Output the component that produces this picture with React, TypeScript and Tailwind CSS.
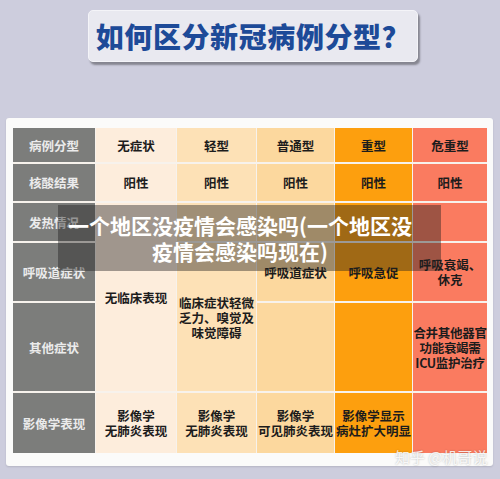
import React from "react";

const gray = "bg-[#7c7d7b] text-[#ebebeb]";
const c2 = "bg-[#fdeddc]";
const c3 = "bg-[#fde1b6]";
const c4 = "bg-[#fcd89e]";
const c5 = "bg-[#fd9f0e]";
const c6 = "bg-[#fa7b60]";

function Cell({ className = "", children }: { className?: string; children?: React.ReactNode }) {
  return (
    <div
      className={`flex flex-col items-center justify-center text-center text-[12.5px] leading-[15px] font-bold text-[#1c1c1c] whitespace-nowrap ${className}`}
    >
      {children}
    </div>
  );
}

export default function App() {
  return (
    <div className="w-[500px] h-[479px] bg-[#cdcddd] flex flex-col font-['Noto_Sans_CJK_SC',sans-serif] overflow-hidden">
      <div className="mt-[10px] ml-[88px] w-[330px] h-[52px] rounded-[5px] bg-[#e9e9f0] border border-[#f4f4f8] shadow-[2px_3px_2px_rgba(0,0,0,0.35)] flex items-center justify-center">
        <span className="text-[28px] font-black text-[#1d4a98] tracking-[0.6px] leading-none">
          如何区分新冠病例分型？
        </span>
      </div>

      <div className="relative mt-[56px] ml-[6px] w-[487px] h-[348px] bg-[#fbfbfa] rounded-[3px] pt-[10px] pl-[7px] shadow-[0_1px_2px_rgba(0,0,0,0.12)]">
        <div className="grid grid-cols-[82px_80px_79px_77px_77px_74px] grid-rows-[34px_37px_38px_58px_88px_60px] gap-x-px gap-y-[2px] bg-[#f7f2ec] w-[474px]">
          {/* header */}
          <Cell className={`${gray} text-[#ebebeb]! col-start-1 row-start-1`}>病例分型</Cell>
          <Cell className={`${c2} col-start-2 row-start-1`}>无症状</Cell>
          <Cell className={`${c3} col-start-3 row-start-1`}>轻型</Cell>
          <Cell className={`${c4} col-start-4 row-start-1`}>普通型</Cell>
          <Cell className={`${c5} col-start-5 row-start-1`}>重型</Cell>
          <Cell className={`${c6} col-start-6 row-start-1`}>危重型</Cell>

          {/* 核酸结果 */}
          <Cell className={`${gray} text-[#ebebeb]! col-start-1 row-start-2`}>核酸结果</Cell>
          <Cell className={`${c2} col-start-2 row-start-2`}>阳性</Cell>
          <Cell className={`${c3} col-start-3 row-start-2`}>阳性</Cell>
          <Cell className={`${c4} col-start-4 row-start-2`}>阳性</Cell>
          <Cell className={`${c5} col-start-5 row-start-2`}>阳性</Cell>
          <Cell className={`${c6} col-start-6 row-start-2`}>阳性</Cell>

          {/* 发热情况 */}
          <Cell className={`${gray} text-[#ebebeb]! col-start-1 row-start-3`}>发热情况</Cell>
          <Cell className={`${c2} col-start-2 row-start-3 row-span-3`}>无临床表现</Cell>
          <Cell className={`${c3} col-start-3 row-start-3`} />
          <Cell className={`${c4} col-start-4 row-start-3`} />
          <Cell className={`${c5} col-start-5 row-start-3`} />
          <Cell className={`${c6} col-start-6 row-start-3`} />

          {/* 呼吸道症状 */}
          <Cell className={`${gray} text-[#ebebeb]! col-start-1 row-start-4`}>呼吸道症状</Cell>
          <Cell className={`${c3} col-start-3 row-start-4 row-span-2`}>
            <span>临床症状轻微</span>
            <span>乏力、嗅觉及</span>
            <span>味觉障碍</span>
          </Cell>
          <Cell className={`${c4} col-start-4 row-start-4`}>呼吸道症状</Cell>
          <Cell className={`${c5} col-start-5 row-start-4`}>呼吸急促</Cell>
          <Cell className={`${c6} col-start-6 row-start-4`}>
            <span>呼吸衰竭、</span>
            <span>休克</span>
          </Cell>

          {/* 其他症状 */}
          <Cell className={`${gray} text-[#ebebeb]! col-start-1 row-start-5`}>其他症状</Cell>
          <Cell className={`${c4} col-start-4 row-start-5`} />
          <Cell className={`${c5} col-start-5 row-start-5`} />
          <Cell className={`${c6} col-start-6 row-start-5 tracking-[-0.3px]`}>
            <span>合并其他器官</span>
            <span>功能衰竭需</span>
            <span>ICU监护治疗</span>
          </Cell>

          {/* 影像学表现 */}
          <Cell className={`${gray} text-[#ebebeb]! col-start-1 row-start-6`}>影像学表现</Cell>
          <Cell className={`${c2} col-start-2 row-start-6`}>
            <span>影像学</span>
            <span>无肺炎表现</span>
          </Cell>
          <Cell className={`${c3} col-start-3 row-start-6`}>
            <span>影像学</span>
            <span>无肺炎表现</span>
          </Cell>
          <Cell className={`${c4} col-start-4 row-start-6`}>
            <span>影像学</span>
            <span>可见肺炎表现</span>
          </Cell>
          <Cell className={`${c5} col-start-5 row-start-6`}>
            <span>影像学显示</span>
            <span>病灶扩大明显</span>
          </Cell>
          <Cell className={`${c6} col-start-6 row-start-6`} />
        </div>

        {/* caption overlay */}
        <div className="absolute left-[52px] top-[87px] w-[383px] h-[66px] bg-[rgba(30,30,30,0.42)] flex flex-col items-center justify-center pr-[19px] text-white font-bold text-[21px] leading-[26px]">
          <span>一个地区没疫情会感染吗(一个地区没</span>
          <span>疫情会感染吗现在)</span>
        </div>

        {/* watermark */}
        <div className="absolute left-[389px] top-[330px] text-[15px] leading-[18px] text-white/85 [text-shadow:0_0_2px_rgba(0,0,0,0.3)] whitespace-nowrap">
          知乎 @机哥说
        </div>
      </div>
    </div>
  );
}
